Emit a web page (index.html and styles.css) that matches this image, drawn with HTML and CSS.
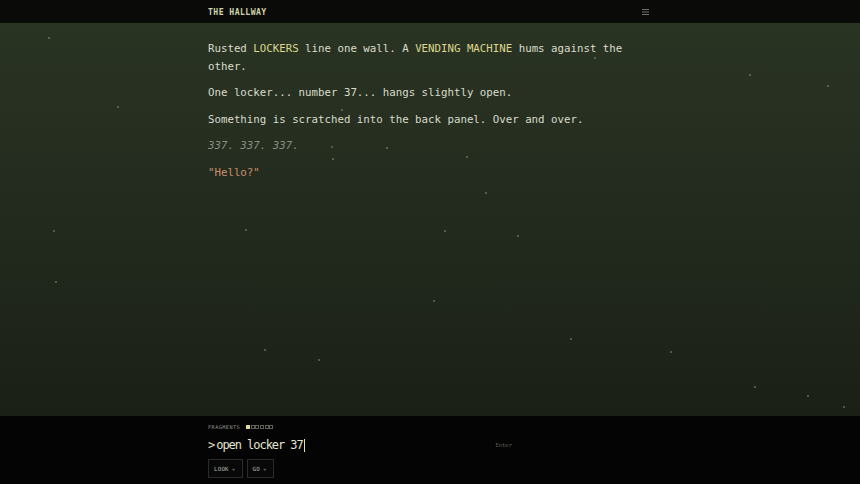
FILE: index.html
```html
<!DOCTYPE html>
<html lang="en">
<head>
    <meta charset="UTF-8">
    <meta name="viewport" content="width=device-width, initial-scale=1.0">
    <title>The Hallway</title>
    <link rel="stylesheet" href="styles.css">
</head>
<body>
    <div class="app">
        <header class="top">
            <div class="wrap top-inner">
                <span class="title">THE HALLWAY</span>
                <svg class="menu" width="7" height="6" viewBox="0 0 7 6">
                    <path d="M0 0.5H7M0 3H7M0 5.5H7" stroke="#6d7068" stroke-width="1"/>
                </svg>
            </div>
        </header>

        <main class="scene">
            <div class="dust">
                <i style="left:48px;top:14px"></i>
                <i style="left:117px;top:83px"></i>
                <i style="left:331px;top:123px"></i>
                <i style="left:386px;top:124px"></i>
                <i style="left:332px;top:135px"></i>
                <i style="left:341px;top:86px"></i>
                <i style="left:466px;top:133px"></i>
                <i style="left:485px;top:169px"></i>
                <i style="left:749px;top:51px"></i>
                <i style="left:827px;top:62px"></i>
                <i style="left:53px;top:207px"></i>
                <i style="left:245px;top:206px"></i>
                <i style="left:444px;top:207px"></i>
                <i style="left:517px;top:212px"></i>
                <i style="left:55px;top:258px"></i>
                <i style="left:433px;top:277px"></i>
                <i style="left:570px;top:315px"></i>
                <i style="left:670px;top:328px"></i>
                <i style="left:264px;top:326px"></i>
                <i style="left:318px;top:336px"></i>
                <i style="left:754px;top:363px"></i>
                <i style="left:807px;top:372px"></i>
                <i style="left:843px;top:383px"></i>
                <i style="left:594px;top:34px"></i>
            </div>
            <div class="wrap story">
                <p>Rusted <span class="hl">LOCKERS</span> line one wall. A <span class="hl">VENDING MACHINE</span> hums against the other.</p>
                <p>One locker... number 37... hangs slightly open.</p>
                <p>Something is scratched into the back panel. Over and over.</p>
                <p class="scratch">337. 337. 337.</p>
                <p class="voice">"Hello?"</p>
            </div>
        </main>

        <footer class="console">
            <div class="wrap">
                <div class="fragments">
                    <span class="label">FRAGMENTS</span>
                    <span class="pips">
                        <b class="on"></b><b></b><b></b><b></b><b></b><b></b>
                    </span>
                </div>
                <div class="prompt-row">
                    <div class="prompt">
                        <span class="caret">&gt;</span><span class="typed">open locker 37</span><span class="cursor"></span>
                    </div>
                    <span class="hint">Enter</span>
                </div>
                <div class="actions">
                    <button class="act">LOOK <span class="chev">&#8964;</span></button>
                    <button class="act">GO <span class="chev">&#8964;</span></button>
                </div>
            </div>
        </footer>
    </div>
</body>
</html>
```

FILE: styles.css
```css
* {
    box-sizing: border-box;
}
html, body {
    margin: 0;
    height: 100%;
    background: #030303;
}
body {
    font-family: "DejaVu Sans Mono", "Liberation Mono", monospace;
    color: #d9dccb;
}
.app {
    display: flex;
    flex-direction: column;
    height: 484px;
    overflow: hidden;
}
.wrap {
    width: 444px;
    margin: 0 auto;
}

/* header */
.top {
    height: 23px;
    background: #0a0b08;
    flex: none;
}
.top-inner {
    height: 100%;
    display: flex;
    align-items: center;
    justify-content: space-between;
    padding-right: 2px;
}
.title {
    font-size: 8.2px;
    font-weight: bold;
    letter-spacing: 0.4px;
    color: #cfd2ad;
    padding-top: 1px;
}
.menu {
    display: block;
    margin-right: 1px;
}

/* scene */
.scene {
    flex: 1;
    position: relative;
    background: linear-gradient(180deg, #2a3423 0%, #232b1e 45%, #1b2017 100%);
}
.dust i {
    position: absolute;
    width: 2px;
    height: 2px;
    border-radius: 50%;
    background: rgba(170, 182, 150, 0.5);
}
.story {
    position: relative;
    padding-top: 17px;
    font-size: 10.75px;
    line-height: 17.7px;
}
.story p {
    margin: 0 0 8.8px;
}
.hl {
    color: #dcd78e;
}
.scratch {
    font-style: italic;
    color: #8b8f82;
}
.voice {
    color: #c98f70;
}

/* console */
.console {
    height: 68px;
    flex: none;
    background: #040404;
    padding-top: 7px;
}
.fragments {
    display: flex;
    align-items: center;
    gap: 6px;
    height: 8px;
}
.label {
    font-size: 5.2px;
    letter-spacing: 0.45px;
    color: #8e9088;
}
.pips {
    display: flex;
    gap: 0.6px;
}
.pips b {
    width: 4px;
    height: 4px;
    border: 0.6px solid #5d5f56;
}
.pips b.on {
    background: #e0dc9a;
    border-color: #e0dc9a;
}
.prompt-row {
    display: flex;
    align-items: center;
    justify-content: space-between;
    width: 304px;
    margin-top: 6px;
    height: 16px;
}
.prompt {
    display: flex;
    align-items: center;
    font-size: 12px;
    color: #e2e4d2;
}
.caret {
    color: #e0dfb8;
    margin-right: 2px;
    letter-spacing: -1px;
}
.typed {
    letter-spacing: -1.05px;
}
.cursor {
    width: 1px;
    height: 13px;
    background: #e0dfb8;
    margin-left: 1px;
}
.hint {
    font-size: 5.5px;
    color: #5f615a;
}
.actions {
    display: flex;
    gap: 4px;
    margin-top: 6px;
}
.act {
    font-family: inherit;
    font-size: 5.8px;
    color: #b9bbb0;
    background: #080808;
    border: 1px solid #2b2c28;
    height: 19px;
    padding: 0 6px 0 5px;
    display: flex;
    align-items: center;
    gap: 3px;
    letter-spacing: 0.2px;
}
.chev {
    font-size: 6px;
    position: relative;
    top: -1px;
}
```
